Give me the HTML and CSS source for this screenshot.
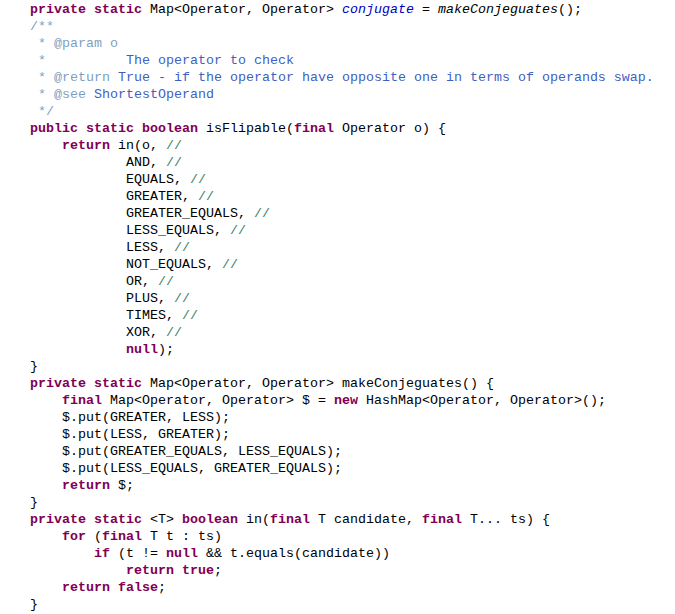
FILE: index.html
```html
<!DOCTYPE html>
<html>
<head>
<meta charset="utf-8">
<link rel="stylesheet" href="styles.css">
</head>
<body>
<pre class="code"><span class="kw">private</span> <span class="kw">static</span> Map&lt;Operator, Operator&gt; <span class="field">conjugate</span> = <span class="smethod">makeConjeguates</span>();
<span class="jdtag">/**</span>
<span class="jdtag"> * @param o</span>
<span class="jdtag"> *</span><span class="jd">          The operator to check</span>
<span class="jdtag"> * @return</span><span class="jd"> True - if the operator have opposite one in terms of operands swap.</span>
<span class="jdtag"> * @see</span><span class="jd"> ShortestOperand</span>
<span class="jdtag"> */</span>
<span class="kw">public</span> <span class="kw">static</span> <span class="kw">boolean</span> isFlipable(<span class="kw">final</span> Operator o) {
    <span class="kw">return</span> in(o, <span class="cm">//</span>
            AND, <span class="cm">//</span>
            EQUALS, <span class="cm">//</span>
            GREATER, <span class="cm">//</span>
            GREATER_EQUALS, <span class="cm">//</span>
            LESS_EQUALS, <span class="cm">//</span>
            LESS, <span class="cm">//</span>
            NOT_EQUALS, <span class="cm">//</span>
            OR, <span class="cm">//</span>
            PLUS, <span class="cm">//</span>
            TIMES, <span class="cm">//</span>
            XOR, <span class="cm">//</span>
            <span class="kw">null</span>);
}
<span class="kw">private</span> <span class="kw">static</span> Map&lt;Operator, Operator&gt; makeConjeguates() {
    <span class="kw">final</span> Map&lt;Operator, Operator&gt; $ = <span class="kw">new</span> HashMap&lt;Operator, Operator&gt;();
    $.put(GREATER, LESS);
    $.put(LESS, GREATER);
    $.put(GREATER_EQUALS, LESS_EQUALS);
    $.put(LESS_EQUALS, GREATER_EQUALS);
    <span class="kw">return</span> $;
}
<span class="kw">private</span> <span class="kw">static</span> &lt;T&gt; <span class="kw">boolean</span> in(<span class="kw">final</span> T candidate, <span class="kw">final</span> T... ts) {
    <span class="kw">for</span> (<span class="kw">final</span> T t : ts)
        <span class="kw">if</span> (t != <span class="kw">null</span> &amp;&amp; t.equals(candidate))
            <span class="kw">return</span> <span class="kw">true</span>;
    <span class="kw">return</span> <span class="kw">false</span>;
}</pre>
</body>
</html>
```
FILE: styles.css
```css
html, body {
  margin: 0;
  padding: 0;
  background: #ffffff;
}
.code {
  margin: 0;
  padding: 1px 0 0 30px;
  font-family: "Liberation Mono", "Courier New", monospace;
  font-size: 13.33px;
  line-height: 17px;
  color: #000000;
  white-space: pre;
}
.kw {
  color: #7f0055;
  font-weight: bold;
}
.field {
  color: #0000c0;
  font-style: italic;
}
.smethod {
  font-style: italic;
}
.jd {
  color: #3f5fbf;
}
.jdtag {
  color: #7f9fbf;
}
.cm {
  color: #3f7f5f;
}
```
